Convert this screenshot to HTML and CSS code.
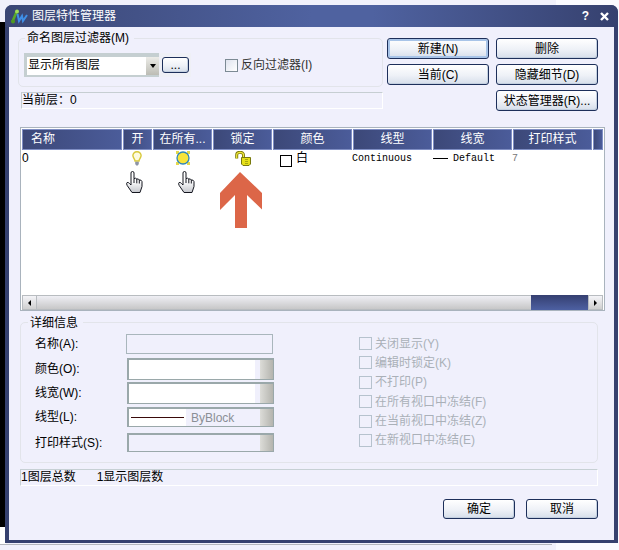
FILE: index.html
```html
<!DOCTYPE html>
<html lang="zh-CN">
<head>
<meta charset="utf-8">
<title>图层特性管理器</title>
<link rel="stylesheet" href="styles.css">
</head>
<body>
<div class="bg-black"></div>
<div class="bg-white-top"></div>
<div class="bg-white-left"></div>
<div class="bg-line"></div>
<div class="dialog">
  <header class="titlebar">
    <svg class="app-icon" width="17" height="15" viewBox="0 0 17 15"><path d="M1.500 12.500 L5.500 3" stroke="#5aa82a" stroke-width="2.600"/><circle cx="2" cy="12.500" r="2" fill="#4f9a20"/><circle cx="6" cy="2.500" r="2" fill="#9fdc58"/><path d="M6.500 5 L8 12 L11 7 L12 12 L16 6" fill="none" stroke="#3f8fe8" stroke-width="2"/></svg>
    <span class="title">图层特性管理器</span>
    <span class="tb-help">?</span>
    <svg class="tb-close" width="9" height="9" viewBox="0 0 9 9"><path d="M1 1 L8 8 M8 1 L1 8" stroke="#fff" stroke-width="2.400"/></svg>
  </header>
  <main class="client">
    <div class="top">
      <div class="top-left">
        <section class="filter">
          <span class="legend legend-filter">命名图层过滤器(M)</span>
          <div class="combo-panel">
            <div class="combo-text">显示所有图层</div>
            <div class="combo-arrow"><i class="tri-down"></i></div>
            <div class="dots-wrap"><button class="btn dots">...</button></div>
          </div>
          <label class="check invert"><i class="box box-on"></i><span>反向过滤器(I)</span></label>
        </section>
        <div class="current">当前层：0</div>
      </div>
      <div class="actions">
        <button class="btn default">新建(N)</button>
        <button class="btn">删除</button>
        <button class="btn">当前(C)</button>
        <button class="btn">隐藏细节(D)</button>
        <button class="btn state">状态管理器(R)...</button>
      </div>
    </div>

    <section class="list">
      <div class="cols head">
        <div>名称</div><div>开</div><div>在所有...</div><div>锁定</div><div>颜色</div><div>线型</div><div>线宽</div><div>打印样式</div><div></div>
      </div>
      <div class="cols row">
        <div class="c-name">0</div>
        <div class="c-icon">
          <svg width="10" height="15" viewBox="0 0 10 15"><path d="M5 .8 C2.300 .8 .9 2.600 .9 4.600 C.9 6.800 2.800 7.800 3 10 H7 C7.200 7.800 9.100 6.800 9.100 4.600 C9.100 2.600 7.700 .8 5 .8Z" fill="#fdfbe0" stroke="#d8c83a" stroke-width="1.400"/><path d="M3.200 10.800H6.800V13L5.800 14.400H4.200L3.200 13Z" fill="#8d94a6"/></svg>
        </div>
        <div class="c-icon">
          <svg width="14" height="14" viewBox="0 0 14 14"><path d="M0 0H3V3H0ZM11 0H14V3H11ZM0 11H3V14H0ZM11 11H14V14H11Z" fill="#e4d94a"/><circle cx="7" cy="7" r="6" fill="#f7e43a" stroke="#2f86b8" stroke-width="1.300"/></svg>
        </div>
        <div class="c-icon">
          <svg class="lock" width="16" height="15" viewBox="0 0 16 15"><path d="M1.700 7.500 V4 C1.700 .4 8.500 .4 8.500 4 V6" fill="none" stroke="#7d7a0c" stroke-width="3"/><path d="M1.700 7.500 V4 C1.700 .4 8.500 .4 8.500 4 V6" fill="none" stroke="#f2ea3c" stroke-width="1.200"/><path d="M6.500 6.500 H15.500 V13 L14 14.500 H8 L6.500 13Z" fill="#e6e018" stroke="#77780e"/><path d="M10 8.500H13M10 10.500H13M10 12.500H13" stroke="#a8a610"/></svg>
        </div>
        <div class="c-color"><i class="swatch"></i><span>白</span></div>
        <div class="c-mono c-line">Continuous</div>
        <div class="c-mono c-width"><i class="dash"></i><span>Default</span></div>
        <div class="c-mono c-style">7</div>
        <div></div>
      </div>
      <svg class="hand hand-a" width="17" height="22" viewBox="0 0 17 22"><use href="#hand"/></svg>
      <svg class="hand hand-b" width="17" height="22" viewBox="0 0 17 22"><defs><linearGradient id="hg" x1="0" y1="0" x2="0" y2="1"><stop offset=".45" stop-color="#fff"/><stop offset="1" stop-color="#c4c6cc"/></linearGradient><g id="hand"><path d="M5 2 Q5 .5 6.500 .5 Q8 .5 8 2 V7.600 Q9.700 6.600 10.800 8 Q12.600 7.400 13.300 9 Q15.400 8.600 16 10.600 V15.500 L14 21.500 H6 L1.200 14.500 Q0 12.300 1 11.600 Q2.300 11 3.500 12.500 L5 14Z" fill="url(#hg)" stroke="#14161f" stroke-width="1"/><path d="M8 7.600V12M10.800 8V12.300M13.300 9V12.500" stroke="#14161f" stroke-width="1" fill="none"/></g></defs><use href="#hand"/></svg>
      <svg class="arrow" width="42" height="56" viewBox="0 0 42 56"><path d="M20 0 L42 21 V37.500 L27 23 V56 H15 V23 L0 38 V21Z" fill="#dc6648"/></svg>
      <div class="scrollbar">
        <div class="sb-btn"><i class="tri-left"></i></div>
        <div class="sb-track"></div>
        <div class="sb-thumb"></div>
        <div class="sb-btn"><i class="tri-right"></i></div>
      </div>
    </section>

    <section class="details">
      <span class="legend legend-details">详细信息</span>
      <div class="form">
        <div class="f-row f1"><label>名称(A):</label><div class="plain"></div></div>
        <div class="f-row f2"><label>颜色(O):</label><div class="drop"><div class="drop-body white"></div><div class="drop-btn"></div></div></div>
        <div class="f-row f3"><label>线宽(W):</label><div class="drop"><div class="drop-body white"></div><div class="drop-btn"></div></div></div>
        <div class="f-row f4"><label>线型(L):</label><div class="drop"><div class="drop-body"><span class="line-sample"><i></i></span><span class="byblock">ByBlock</span></div><div class="drop-btn"></div></div></div>
        <div class="f-row f5"><label>打印样式(S):</label><div class="drop"><div class="drop-body"></div><div class="drop-btn"></div></div></div>
      </div>
      <div class="flags">
        <label class="check off"><i class="box"></i><span>关闭显示(Y)</span></label>
        <label class="check off"><i class="box"></i><span>编辑时锁定(K)</span></label>
        <label class="check off"><i class="box"></i><span>不打印(P)</span></label>
        <label class="check off"><i class="box"></i><span>在所有视口中冻结(F)</span></label>
        <label class="check off"><i class="box"></i><span>在当前视口中冻结(Z)</span></label>
        <label class="check off"><i class="box"></i><span>在新视口中冻结(E)</span></label>
      </div>
    </section>

    <div class="status"><span>1图层总数</span><span>1显示图层数</span></div>

    <footer class="footer">
      <button class="btn">确定</button>
      <button class="btn">取消</button>
    </footer>
  </main>
</div>
</body>
</html>
```
FILE: styles.css
```css
* { box-sizing: border-box; }
html, body { margin: 0; height: 100%; }
body {
  position: relative;
  width: 619px;
  height: 550px;
  overflow: hidden;
  background: #f1f1fb;
  font: 12px/14px "Liberation Sans", "Noto Sans CJK SC", sans-serif;
  color: #000;
}
.bg-black { position: absolute; left: 0; top: 22px; width: 6px; height: 505px; background: #000; }
.bg-white-top { position: absolute; left: 556px; top: 0; width: 63px; height: 550px; background: #fbfbff; }
.bg-white-left { position: absolute; left: 0; top: 527px; width: 6px; height: 17px; background: #fff; }
.bg-line { position: absolute; left: 0; top: 544px; width: 552px; height: 1px; background: #b4b6bc; }

.dialog {
  position: absolute;
  left: 5px;
  top: 5px;
  width: 613px;
  height: 538px;
  display: flex;
  flex-direction: column;
  background: #36416f;
  border-radius: 7px 7px 0 0;
  padding: 0 4px 3px;
}
.titlebar {
  height: 22px;
  margin: 0 -4px;
  padding: 0 9px 0 6px;
  display: flex;
  align-items: center;
  color: #fff;
  border-radius: 7px 7px 0 0;
  background: linear-gradient(90deg, #3a4674 0%, #4f62a0 50%, #4f62a0 60%, #36416f 100%);
}
.app-icon { flex: none; }
.title { margin-left: 4px; flex: 1; }
.tb-help { font-weight: bold; font-size: 12px; margin-right: 11px; }
.client {
  flex: 1;
  background: #f0f0fc;
  padding: 11px 0 0 9px;
  display: flex;
  flex-direction: column;
}

.top { display: flex; height: 73px; }
.top-left { width: 365px; }
.legend {
  position: absolute;
  background: #f0f0fc;
  padding: 0 5px 0 2px;
  white-space: nowrap;
}
.filter {
  position: relative;
  height: 49px;
  border: 1px solid #e2e4ea;
  border-radius: 5px;
  display: flex;
  align-items: flex-start;
  padding: 14px 0 0 5px;
}
.legend-filter { left: 6px; top: -8px; }
.combo-panel {
  display: flex;
  width: 167px;
  height: 24px;
  padding: 4px 0 2px 3px;
  background: #c5cfd1;
}
.combo-text {
  width: 119px;
  background: #fff;
  padding-left: 1px;
  line-height: 17px;
  white-space: nowrap;
}
.combo-arrow {
  width: 13px;
  display: flex;
  align-items: center;
  justify-content: center;
  background: linear-gradient(#ecece8, #bcbcb4);
}
.dots-wrap {
  flex: 1;
  margin: -4px 0 -2px;
  background: #eff0f6;
  padding: 4px 0 0 3px;
}
.tri-down { border: 3px solid transparent; border-top: 4px solid #000; border-bottom: 0; width: 0; height: 0; }
.btn {
  font: inherit;
  color: #000;
  padding: 0;
  border: 1px solid #1d2f5a;
  border-radius: 3px;
  background: linear-gradient(#ffffff 0%, #eef1f7 55%, #d6deea 100%);
  box-shadow: inset -1px -1px 0 #c4d0e0;
  white-space: nowrap;
}
.dots { width: 27px; height: 16px; line-height: 12px; }
.default { box-shadow: inset 0 0 0 2px #a8c4e8; }
.check { display: flex; align-items: center; white-space: nowrap; }
.box { display: block; flex: none; width: 13px; height: 13px; margin-right: 3px; border: 1px solid #b6c2ce; }
.box-on { border-color: #7c8a94; background: linear-gradient(135deg, #dfe3ee, #fff); }
.invert { margin: 5px 0 0 34px; }
.invert span { color: #333; }
.current {
  margin: 5px 0 0 3px;
  height: 17px;
  width: 362px;
  border: 1px solid;
  border-color: #c6ced2 #fff #fff #c6ced2;
  line-height: 15px;
  white-space: nowrap;
}
.actions {
  margin-left: 4px;
  display: grid;
  grid-template-columns: 102px 102px;
  grid-auto-rows: 21px;
  column-gap: 7px;
  row-gap: 5px;
}
.state { grid-column: 2; }

.list {
  position: relative;
  margin: 16px 0 0 2px;
  width: 585px;
  height: 184px;
  border: 1px solid #a9b3bd;
  border-bottom-width: 1px;
  padding: 1px 1px 0;
  background: #fff;
  display: flex;
  flex-direction: column;
}
.cols {
  display: grid;
  grid-template-columns: 100px 29px 59px 59px 79px 79px 79px 79px 10px;
  column-gap: 1px;
}
.head { height: 21px; flex: none; }
.head div {
  border: 1px solid #7f8ec4;
  background: linear-gradient(90deg, #3c4878, #4b5c9a);
  color: #fff;
  text-align: center;
  line-height: 19px;
  white-space: nowrap;
}
.head div:first-child { text-align: left; padding-left: 8px; }
.row { height: 17px; flex: none; line-height: 16px; }
.c-icon { display: flex; justify-content: center; padding-top: 1px; }
.c-icon:nth-child(2) svg { margin-right: 1px; }
.c-icon:nth-child(4) svg { margin-left: 1px; }
.c-color { display: flex; padding: 0 0 0 7px; }
.swatch { flex: none; width: 12px; height: 12px; margin: 5px 4px 0 0; border: 1px solid #000; background: #fff; }
.c-mono { font: 10px/17px "Liberation Mono", monospace; white-space: nowrap; }
.c-line { margin-left: -1px; }
.c-width { display: flex; align-items: center; }
.dash { flex: none; width: 15px; height: 1px; background: #000; margin-right: 5px; }
.c-style { color: #777; margin-left: -1px; }
.hand { position: absolute; top: 43px; }
.hand-a { left: 105px; }
.hand-b { left: 157px; }
.arrow { position: absolute; left: 199px; top: 44px; }
.scrollbar {
  margin-top: auto;
  height: 15px;
  flex: none;
  display: flex;
  background: linear-gradient(#f2f2f8, #c4c4c4);
}
.sb-btn {
  width: 15px;
  border: 1px solid #b8bcc0;
  background: linear-gradient(#f4f4f8, #cfcfcf);
  display: flex;
  align-items: center;
  justify-content: center;
}
.sb-track { flex: 1; border-top: 1px solid #b8bcc0; border-bottom: 1px solid #b8bcc0; }
.sb-thumb { width: 57px; background: linear-gradient(#353f70, #4d60a2); }
.tri-left, .tri-right { width: 0; height: 0; border: 3px solid transparent; }
.tri-left { border-right: 3px solid #000; border-left: 0; }
.tri-right { border-left: 3px solid #000; border-right: 0; }

.details {
  position: relative;
  margin: 11px 0 0 2px;
  width: 578px;
  height: 141px;
  border: 1px solid #e2e4ea;
  border-radius: 5px;
  display: flex;
  padding: 11px 0 0 14px;
}
.legend-details { left: 7px; top: -7px; }
.form { width: 324px; flex: none; }
.f-row { display: flex; align-items: center; }
.f-row label { width: 91px; flex: none; white-space: nowrap; }
.f1 { height: 20px; }
.f2 { height: 22px; margin-top: 4px; }
.f3 { height: 22px; margin-top: 2px; }
.f4 { height: 20px; margin-top: 3px; }
.f5 { height: 19px; margin-top: 6px; }
.plain { width: 147px; height: 100%; border: 1px solid #a9b6bc; }
.drop {
  display: flex;
  width: 147px;
  height: 100%;
  margin-left: 1px;
  border: 1px solid #9aa8aa;
  border-top-width: 2px;
  border-left-width: 2px;
  background: #f0f0fc;
}
.drop-body {
  flex: 1;
  display: flex;
  align-items: center;
  margin-right: 1px;
  color: #8a8f96;
}
.white { background: #fff; margin-right: 5px; }
.drop-btn { width: 13px; flex: none; background: linear-gradient(90deg, #dcdcd8, #b4b4ae); }
.line-sample {
  width: 57px;
  height: 100%;
  background: #fff;
  display: flex;
  align-items: center;
  justify-content: center;
  margin-right: 5px;
}
.line-sample i { display: block; width: 53px; height: 1px; background: #3a0a0a; }
.byblock { font-size: 12px; }
.flags {
  margin: 3px 0 0 0;
  display: flex;
  flex-direction: column;
  row-gap: 6.4px;
}
.flags .check { height: 13px; }
.off { color: #aab0b8; }

.status {
  margin: 6px 0 0 2px;
  width: 578px;
  height: 17px;
  flex: none;
  border: 1px solid;
  border-color: #c6d0d4 #fff #fff #c6d0d4;
  line-height: 15px;
  display: flex;
  column-gap: 21px;
  white-space: nowrap;
}
.footer {
  margin: 13px 0 0 0;
  width: 580px;
  display: flex;
  justify-content: flex-end;
  column-gap: 11px;
}
.footer .btn { width: 72px; height: 20px; }
```
